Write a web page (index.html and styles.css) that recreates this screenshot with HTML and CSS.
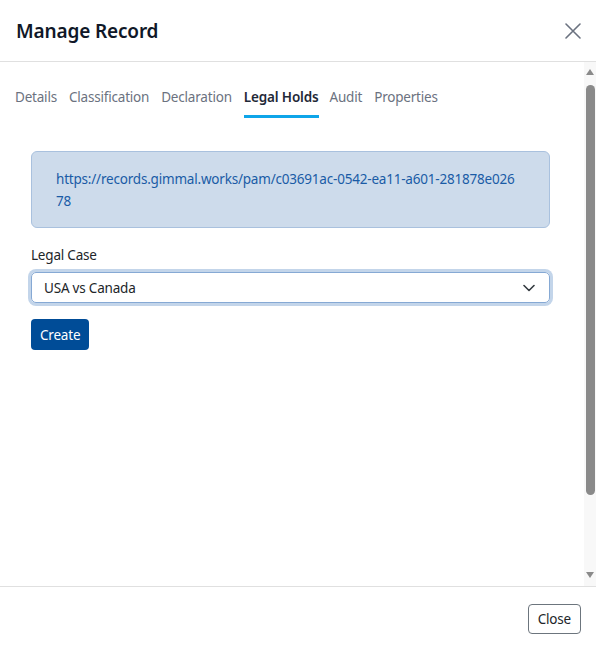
FILE: index.html
```html
<!DOCTYPE html>
<html lang="en">
<head>
<meta charset="utf-8">
<title>Manage Record</title>
<link rel="stylesheet" href="styles.css">
</head>
<body>
<div class="modal">
  <header class="modal-header">
    <h1 class="modal-title">Manage Record</h1>
    <button class="close-x" aria-label="Close">
      <svg width="16" height="16" viewBox="0 0 16 16"><path d="M1 1 L15 15 M15 1 L1 15" stroke="#6b7280" stroke-width="1.6" fill="none" stroke-linecap="round"/></svg>
    </button>
  </header>
  <div class="modal-main">
    <div class="modal-content">
      <nav class="tabs">
        <span class="tab">Details</span>
        <span class="tab">Classification</span>
        <span class="tab">Declaration</span>
        <span class="tab active">Legal Holds</span>
        <span class="tab">Audit</span>
        <span class="tab">Properties</span>
      </nav>
      <section class="panel">
        <div class="alert"><a class="alert-link">https://records.gimmal.works/pam/c03691ac-0542-ea11-a601-281878e02678</a></div>
        <label class="label">Legal Case</label>
        <div class="select">
          <span>USA vs Canada</span>
          <svg width="12" height="8" viewBox="0 0 12 8"><path d="M1 1.5 L6 6.5 L11 1.5" stroke="#343a40" stroke-width="1.6" fill="none" stroke-linecap="round" stroke-linejoin="round"/></svg>
        </div>
        <button class="btn-primary">Create</button>
      </section>
    </div>
    <div class="scrollbar">
      <span class="arrow-up"></span>
      <span class="track"><span class="thumb"></span></span>
      <span class="arrow-down"></span>
    </div>
  </div>
  <footer class="modal-footer">
    <button class="btn-outline">Close</button>
  </footer>
</div>
</body>
</html>
```
FILE: styles.css
```css
* { box-sizing: border-box; }
html, body { margin: 0; padding: 0; background: #fff; }
body { font-family: "Noto Sans", "Open Sans", sans-serif; font-size: 14px; color: #212529; }
.modal { width: 596px; height: 649px; display: flex; flex-direction: column; overflow: hidden; }
.modal-header { height: 62px; flex: none; display: flex; align-items: center; justify-content: space-between; padding: 0 15px 0 16px; border-bottom: 1px solid #e0e0e0; }
.modal-title { margin: 0; font-size: 19px; font-weight: 600; color: #101828; letter-spacing: -0.15px; }
.close-x { border: 0; background: none; padding: 0; width: 16px; height: 16px; display: flex; }
.modal-main { flex: 1; display: flex; min-height: 0; }
.modal-content { flex: 1; padding: 0 0 0 15px; }
.tabs { display: flex; gap: 12px; margin-top: 25px; }
.tab { line-height: 20px; padding-bottom: 8px; border-bottom: 3px solid transparent; color: #6b7280; font-size: 13.5px; letter-spacing: -0.2px; }
.tab.active { color: #1f2937; font-weight: 600; border-bottom-color: #0ea5e9; letter-spacing: -0.15px; }
.tab.active + .tab { margin-left: -1px; }
.panel { padding: 33px 34px 0 16px; display: flex; flex-direction: column; align-items: flex-start; }
.alert { width: 100%; background: #cddbeb; border: 1px solid #a9c1de; border-radius: 6px; padding: 16px 30px 15px 24px; line-height: 21px; word-break: break-all; }
.alert-link { color: #1a5ba6; font-size: 13.5px; letter-spacing: -0.2px; }
.label { margin-top: 17px; line-height: 20px; color: #212529; font-size: 13.5px; letter-spacing: -0.2px; }
.select { margin-top: 7px; width: 100%; height: 31px; border: 1px solid #86a9d4; border-radius: 5px; box-shadow: 0 0 0 3px #c3d5ea; display: flex; align-items: center; justify-content: space-between; padding: 0 14px 0 12px; color: #212529; font-size: 13.5px; letter-spacing: -0.2px; }
.btn-primary { margin-top: 16px; height: 31px; padding: 0 9px; background: #004c97; color: #fff; border: 0; border-radius: 4px; font-family: inherit; font-size: 13.5px; letter-spacing: -0.2px; }
.scrollbar { width: 12px; flex: none; background: #f8f8f8; display: flex; flex-direction: column; align-items: center; padding: 7px 0 8px 0; }
.arrow-up { width: 0; height: 0; border-left: 4.5px solid transparent; border-right: 4.5px solid transparent; border-bottom: 6px solid #8a8a8a; }
.arrow-down { width: 0; height: 0; border-left: 4.5px solid transparent; border-right: 4.5px solid transparent; border-top: 6px solid #8a8a8a; }
.track { flex: 1; width: 100%; display: flex; justify-content: center; padding: 10px 0 0 0; }
.thumb { width: 9px; height: 410px; background: #8a8a8a; border-radius: 5px; }
.modal-footer { height: 63px; flex: none; border-top: 1px solid #e0e0e0; display: flex; align-items: center; justify-content: flex-end; padding: 0 15px 0 0; }
.btn-outline { height: 30px; padding: 0 9px; background: #fff; border: 1px solid #6c757d; border-radius: 4px; color: #212529; font-family: inherit; font-size: 13.5px; letter-spacing: -0.2px; margin-top: 1px; }
```
